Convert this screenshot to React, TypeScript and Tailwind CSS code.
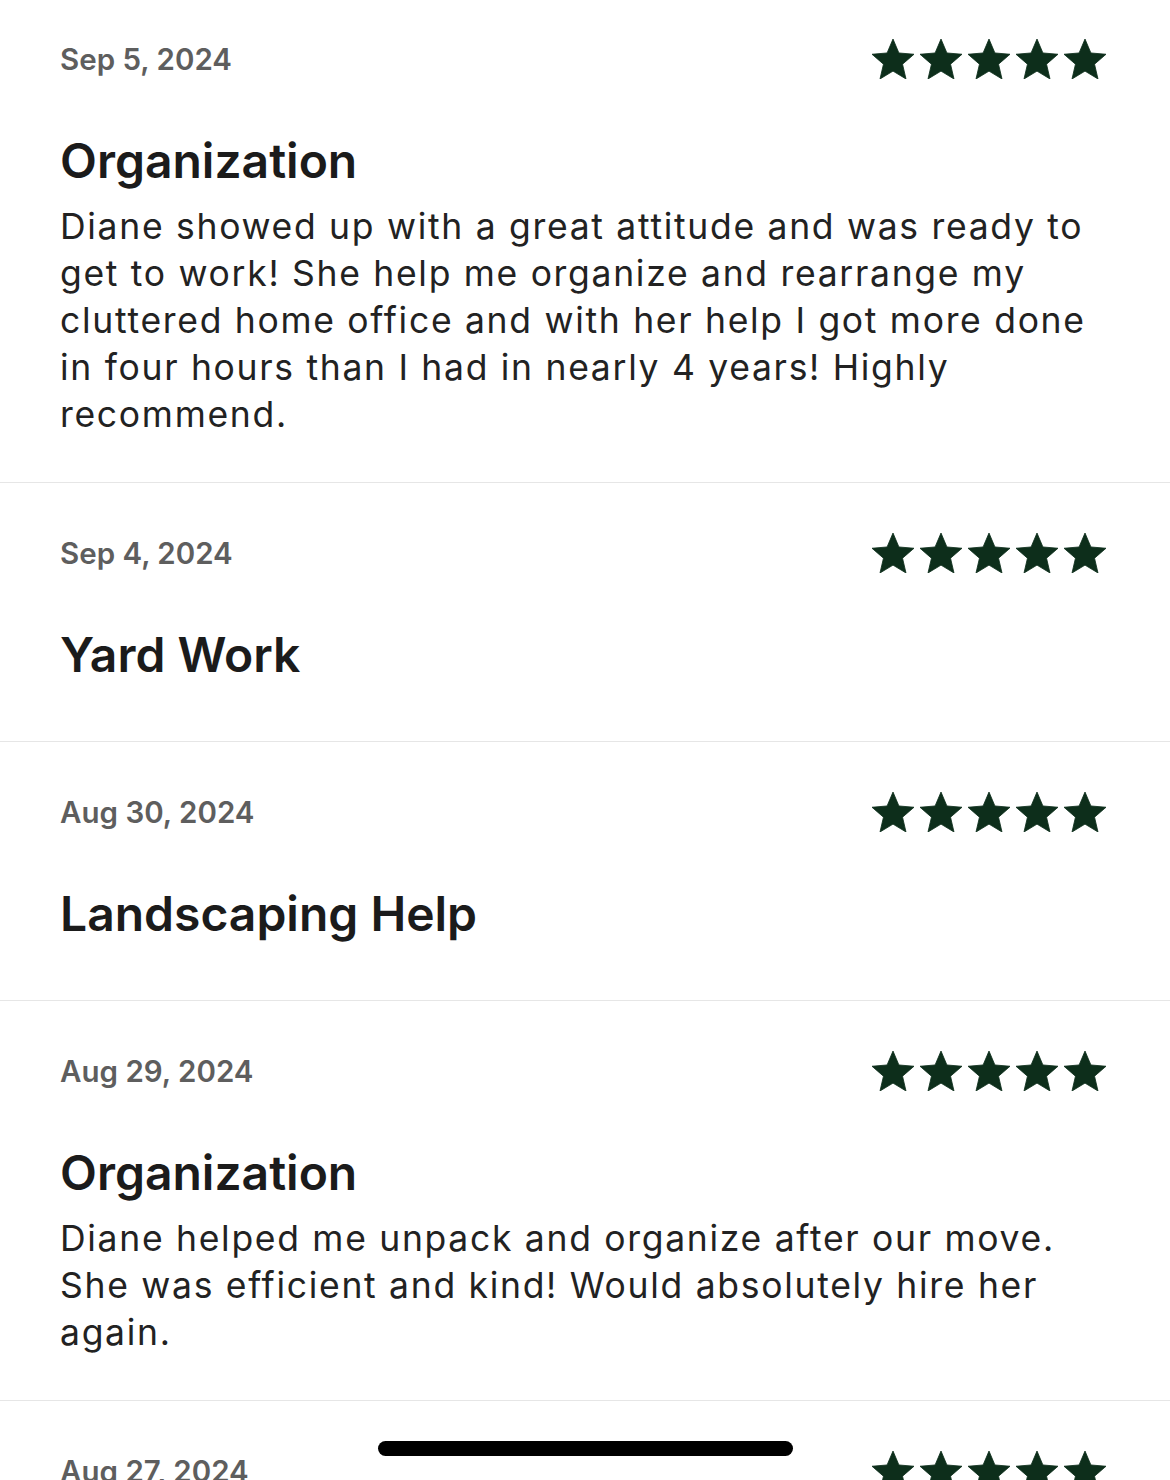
const reviews = [
  {
    date: 'Sep 5, 2024',
    title: 'Organization',
    body: 'Diane showed up with a great attitude and was ready to get to work! She help me organize and rearrange my cluttered home office and with her help I got more done in four hours than I had in nearly 4 years! Highly recommend.',
  },
  { date: 'Sep 4, 2024', title: 'Yard Work', body: '' },
  { date: 'Aug 30, 2024', title: 'Landscaping Help', body: '' },
  {
    date: 'Aug 29, 2024',
    title: 'Organization',
    body: 'Diane helped me unpack and organize after our move. She was efficient and kind! Would absolutely hire her again.',
  },
  { date: 'Aug 27, 2024', title: 'Organization', body: '' },
];

function Star() {
  return (
    <svg width="42" height="40" viewBox="2 2 20 19" className="shrink-0">
      <path
        fill="#0d2e1b"
        stroke="#0d2e1b"
        strokeWidth="0.4"
        strokeLinejoin="round"
        d="M12 17.27L18.18 21l-1.64-7.03L22 9.24l-7.19-.61L12 2 9.19 8.63 2 9.24l5.46 4.73L5.82 21z"
      />
    </svg>
  );
}

export default function App() {
  return (
    <div
      className="relative h-[1480px] w-[1170px] overflow-hidden bg-white"
      style={{ fontFamily: 'Inter, "Noto Sans", sans-serif' }}
    >
      <div className="-mt-[11px]">
        {reviews.map((r, i) => (
          <div key={i} className="border-b border-[#e6e6e6] pl-[60px] pr-[62px] pt-[47px] pb-[44px]">
            {/* Date + rating */}
            <div className="flex h-[46px] items-center justify-between">
              <span className="text-[29.5px] font-semibold leading-9 text-[#5e5e5e]">{r.date}</span>
              <div className="flex gap-[6px] pr-[2px]">
                <Star />
                <Star />
                <Star />
                <Star />
                <Star />
              </div>
            </div>

            <h2 className="mt-[50px] text-[48px] font-semibold leading-[58px] text-[#1b1b1b]">
              {r.title}
            </h2>
            <p className="mt-[13px] text-[35.5px] leading-[47px] tracking-[1.7px] text-[#222222]">{r.body}</p>
          </div>
        ))}
      </div>

      {/* Home indicator */}
      <div className="absolute left-[378px] top-[1441px] h-[15px] w-[415px] rounded-full bg-black" />
    </div>
  );
}
